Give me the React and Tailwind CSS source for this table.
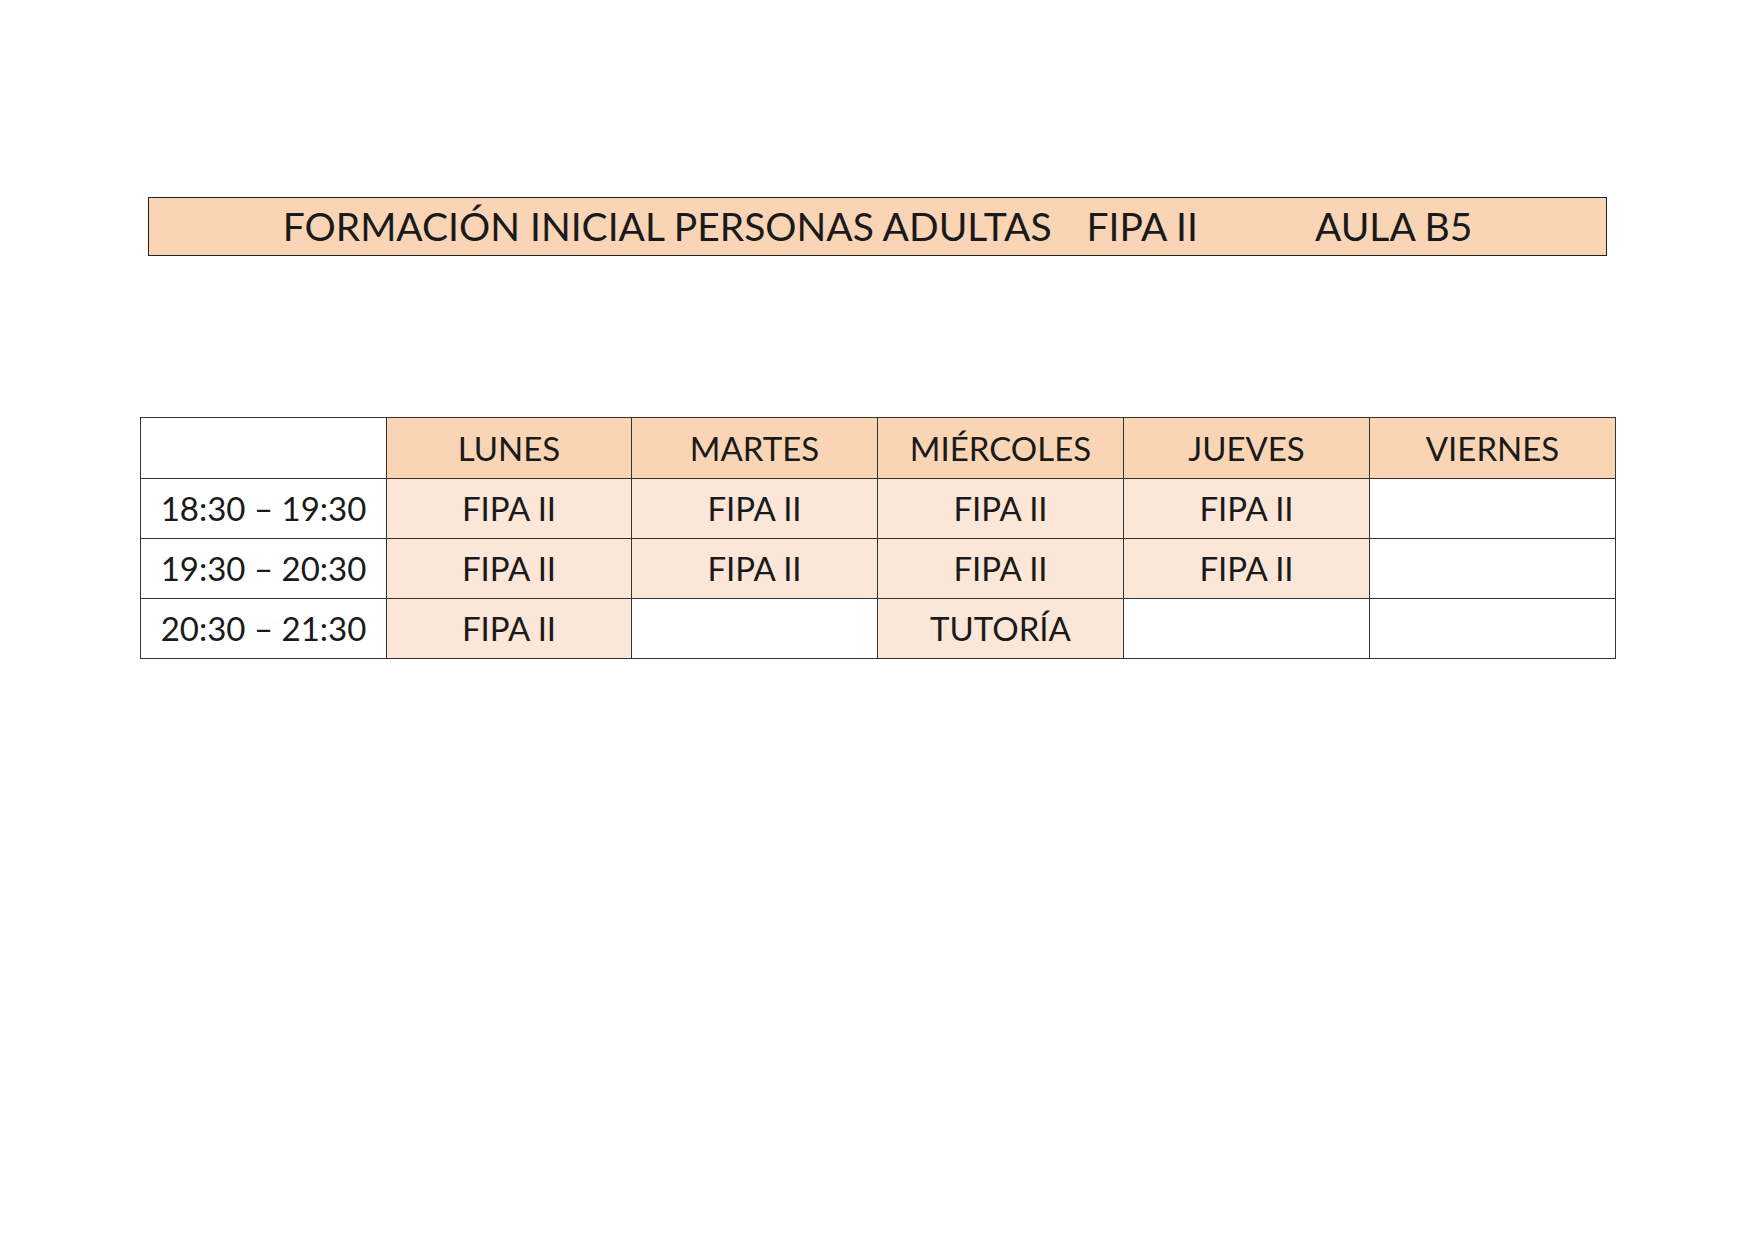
export default function App() {
  const days = ["LUNES", "MARTES", "MIÉRCOLES", "JUEVES", "VIERNES"];
  const rows = [
    ["18:30 – 19:30", ["FIPA II", "FIPA II", "FIPA II", "FIPA II", ""]],
    ["19:30 – 20:30", ["FIPA II", "FIPA II", "FIPA II", "FIPA II", ""]],
    ["20:30 – 21:30", ["FIPA II", "", "TUTORÍA", "", ""]],
  ];
  return (
    <div className="w-[1755px] h-[1241px] bg-white text-[#1a1a1a] font-normal" style={{ fontFamily: "Lato, 'Open Sans', sans-serif" }}>
      <div className="pt-[197px] pl-[148px]">
        <div className="w-[1459px] h-[59px] bg-[#F9D5B6] border border-[#222] flex items-center justify-center text-[39px] leading-none whitespace-nowrap">
          <span>FORMACIÓN INICIAL PERSONAS ADULTAS</span>
          <span className="ml-[35px]">FIPA II</span>
          <span className="ml-[117px]">AULA B5</span>
        </div>
      </div>
      <div className="pt-[161px] pl-[140px]">
        <table className="table-fixed border-collapse w-[1475px] text-[33px] leading-none">
          <colgroup>
            <col className="w-[246px]" />
            <col className="w-[245px]" />
            <col className="w-[246px]" />
            <col className="w-[246px]" />
            <col className="w-[246px]" />
            <col className="w-[246px]" />
          </colgroup>
          <tbody>
            <tr className="h-[61px]">
              <td className="border border-[#333] bg-white"></td>
              {days.map((d) => (
                <td key={d} className="border border-[#333] bg-[#F9D5B6] text-center align-middle">{d}</td>
              ))}
            </tr>
            {rows.map(([time, cells]) => (
              <tr key={time} className="h-[60px]">
                <td className="border border-[#333] bg-white text-center align-middle">{time}</td>
                {cells.map((c, i) => (
                  <td key={i} className={"border border-[#333] text-center align-middle " + (c ? "bg-[#FCE6D8]" : "bg-white")}>{c}</td>
                ))}
              </tr>
            ))}
          </tbody>
        </table>
      </div>
    </div>
  );
}
